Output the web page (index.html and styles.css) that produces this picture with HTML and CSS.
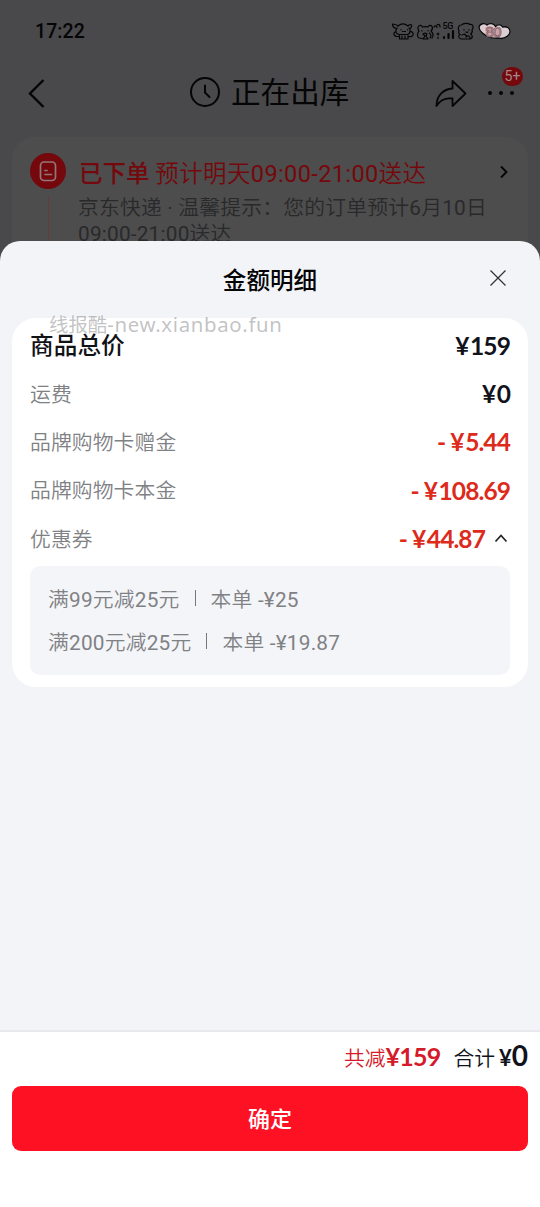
FILE: index.html
```html
<!DOCTYPE html>
<html lang="zh-CN">
<head>
<meta charset="utf-8">
<meta name="viewport" content="width=device-width">
<title>金额明细</title>
<link rel="stylesheet" href="styles.css">
</head>
<body>
<div class="screen">
  <header class="status">
    <span class="clock">17:22</span>
    <svg class="status-icons" width="120" height="22" viewBox="392 20 120 22" fill="none" stroke="#050506" stroke-width="1.2" stroke-linecap="round" stroke-linejoin="round">
      <path d="M398 26c-2-2-4-1.500-5.500-2 0 2 1.500 4 4 4.500M398 26c3-2.500 7-2.500 10 0 1-1.500 2.500-1.500 3.500-1 .5 1.500-.5 3-2 4M397 28c-2 3-1 6 1.500 6.500h9c3-1 3.500-4 1.500-6.500M395 32c-2 1-1 4 1.500 4.500h3M409.500 32c3-1 4 1 3.500 3-.5 1.500-2 2-4 1.500M399.500 35.500v3.500h8.500v-3.500M402 36v2m3-2v2M402.500 31.500h3M401 29.500v.3m6.500-.3v.3"/>
      <path d="M419 31c-1.500-2-1.500-5 .5-5.500 1.500-.5 2.500.5 3 1.500 1.500-.5 4-.5 5.500 0 1-2 3-2 4-.5s.5 3-1 4.500c2 2 2.500 5 1 7M419 31c-2 2-2 6 0 7l3 .500m8-.5c1.500-1 1-4-.5-5M422 30.500v.5m6-.5v.5M423 34l2-1 2 1-1 2 2 3h-5l2-3z"/>
      <path d="M434 27c1-1.500 2-1.500 3 .5M437 25c2-1.500 3 0 3 2M438 33v2m-1-1h2m-1 3v1.500"/>
      <path stroke-width="2.200" d="M444 37v1M448.500 34v4M453 31v7"/>
      <path d="M459 31c-1.500-3-.5-6 2.500-6 1.500-2 7-2 8.500-.5 2-.5 3.500 1 3 3.500l-1 2c1 2 0 3-1.500 4 2.500 1.500 2.500 4.500-.5 5h-9c-3-1-3-4-.5-4.500-2 0-2-2-1.500-3.500zM464 29.500v.5m5-.5v.5m-3 2l1 .5 1-.5M462 35l2.500-1 2 2M466 37c2-2 4-1 4 1"/>
      <path fill="#dccdd2" stroke="#0a0a0b" stroke-width="1.300" d="M489 37c-5-2-10-6-10-10 1-4 6-4 8-2 2-2 7-2 8.500 1.500 2-2.500 6-2 7 .5 4-1 7.500 1 7.500 4.500 0 3.500-4.500 7-9 7-4-1.500-7 1-12-1.500z"/>
      <path fill="#cfa3a9" stroke="none" d="M489 35.500c-4-2-5-6-3-8.500 3-2 7-1 8.500 2 4-2 7 0 7 3.500 0 4-6 5.500-12.500 3z"/>
      <text class="net-label" x="442.500" y="29" textLength="11">5G</text>
      <text class="battery-label" x="485.500" y="37" textLength="16">80</text>
    </svg>
  </header>
  <nav class="nav">
    <svg class="back" width="18" height="32" viewBox="0 0 18 32"><path d="M16.500 3 3 16.500 16.500 30" fill="none" stroke="#050506" stroke-width="2.400"/></svg>
    <div class="nav-title">
      <svg width="32" height="32" viewBox="0 0 32 32" fill="none" stroke="#050506" stroke-width="2" stroke-linecap="round"><circle cx="16" cy="15" r="14"/><path d="M16 8.500v7l4.500 4.500"/></svg>
      <span>正在出库</span>
    </div>
    <svg class="share" width="32" height="30" viewBox="0 0 32 30"><path d="M17.500 3 30.500 15.500 17.500 28v-7.500C10 19.500 5 22 1.500 28 1.500 18 8 11 17.500 10.500z" fill="none" stroke="#050506" stroke-width="1.800" stroke-linejoin="round"/></svg>
    <div class="more">
      <i></i><i></i><i></i>
      <span class="badge">5+</span>
    </div>
  </nav>
  <section class="order">
    <div class="timeline">
      <svg width="36" height="36" viewBox="0 0 36 36" fill="none" stroke="#92777a" stroke-width="1.700" stroke-linecap="round"><circle cx="18" cy="18" r="18" fill="#75080c" stroke="none"/><rect x="10.500" y="9" width="15" height="18.500" rx="3.500"/><path d="M15 17.500h2M15 21.500h6.500"/></svg>
      <div class="line"></div>
    </div>
    <div class="order-body">
      <div class="order-head">
        <span><b>已下单</b> <em>预计明天09:00-21:00送达</em></span>
        <svg width="10" height="16" viewBox="0 0 10 16"><path d="M1 2.500 6.500 8 1 13.500" fill="none" stroke="#050506" stroke-width="1.800"/></svg>
      </div>
      <p class="order-tip"><span>京东快递 · 温馨提示：您的订单预计6月10日</span><br>09:00-21:00送达</p>
    </div>
  </section>

  <main class="sheet">
    <div class="sheet-head">
      <h1>金额明细</h1>
      <svg class="close" width="18" height="18" viewBox="0 0 18 18"><path d="M1.500 1.500l15 15M16.500 1.500l-15 15" stroke="#333438" stroke-width="1.300"/></svg>
    </div>
    <div class="card">
      <div class="row total"><span class="label">商品总价</span><span class="price"><s>¥</s>159</span></div>
      <div class="row"><span class="label">运费</span><span class="price"><s>¥</s>0</span></div>
      <div class="row"><span class="label">品牌购物卡赠金</span><span class="price minus">- <s>¥</s>5.44</span></div>
      <div class="row"><span class="label">品牌购物卡本金</span><span class="price minus">- <s>¥</s>108.69</span></div>
      <div class="row"><span class="label">优惠券</span><span class="price minus">- <s>¥</s>44.87</span>
        <svg class="fold" width="16" height="12" viewBox="0 0 16 12"><path d="M1.500 8.500 7 2.500l5.500 6" fill="none" stroke="#222327" stroke-width="1.700"/></svg>
      </div>
      <div class="coupons">
        <div class="coupon"><span>满99元减25元</span><i></i><span>本单 -¥25</span></div>
        <div class="coupon"><span>满200元减25元</span><i></i><span>本单 -¥19.87</span></div>
      </div>
    </div>
    <footer class="footer">
      <div class="sum">
        <span class="saved">共减<b>¥159</b></span>
        <span class="due">合计<small>¥</small><b>0</b></span>
      </div>
      <button class="confirm">确定</button>
    </footer>
    <div class="watermark">线报酷<span>-new.xianbao.fun</span></div>
  </main>
</div>
</body>
</html>
```
FILE: styles.css
```css
* { box-sizing: border-box; }
body { margin: 0; font-family: Roboto, "Noto Sans CJK SC", sans-serif; }
i, em { font-style: normal; }

.screen {
  position: relative;
  width: 540px;
  height: 1207px;
  overflow: hidden;
  background: #49494b;
  color: #050506;
}

.status {
  display: flex;
  align-items: center;
  justify-content: space-between;
  height: 62px;
  padding: 0 28px 0 35px;
}
.clock { font-size: 19.5px; font-weight: 500; letter-spacing: .1px; }
.net-label { font: 500 9px Roboto, sans-serif; fill: #050506; stroke: none; }
.battery-label { font: 400 15px "Liberation Sans", sans-serif; fill: #dcb4ba; stroke: #7d5c62; stroke-width: .7; }

.nav {
  display: flex;
  align-items: center;
  height: 62px;
  padding: 0 25px 0 27px;
}
.nav-title {
  display: flex;
  align-items: center;
  gap: 10px;
  margin-left: 144px;
  margin-right: auto;
  font-size: 29.6px;
  line-height: 40px;
}
.share { margin-right: 21px; }
.more { position: relative; display: flex; gap: 7px; width: 27px; }
.more i { width: 4px; height: 4px; border-radius: 50%; background: #050506; }
.badge {
  position: absolute;
  left: 14px;
  top: -24px;
  width: 21px;
  height: 19px;
  border-radius: 10px;
  background: #75080c;
  color: #a58a8d;
  font-size: 14px;
  line-height: 19px;
  text-align: center;
}

.order {
  display: flex;
  gap: 12px;
  height: 240px;
  margin: 13px 12px 0;
  padding: 16px 18px;
  border-radius: 22px;
  background: #4d4d4d;
}
.timeline { display: flex; flex-direction: column; align-items: center; gap: 7px; width: 36px; }
.line { flex: 1; width: 1px; background: #653b3e; }
.order-body { flex: 1; }
.order-head {
  display: flex;
  justify-content: space-between;
  align-items: center;
  height: 37px;
  padding-left: 1px;
  color: #75080c;
  font-size: 23.5px;
  white-space: nowrap;
}
.order-head b { font-weight: 500; }
.order-head em, .order-tip, .label, .coupon, .sum {
  font-family: Roboto, "Noto Sans CJK SC DemiLight", "Noto Sans CJK SC", sans-serif;
  font-weight: 400;
}
.order-head em { letter-spacing: .38px; }
.order-tip {
  margin: 5px 0 0;
  font-size: 20.8px;
  line-height: 26px;
  letter-spacing: .2px;
  color: #29292b;
  white-space: nowrap;
}

.sheet {
  position: absolute;
  inset: 241px 0 0;
  display: flex;
  flex-direction: column;
  border-radius: 20px 20px 0 0;
  background: #f3f4f8;
}
.sheet-head {
  position: relative;
  display: flex;
  align-items: center;
  justify-content: center;
  height: 77px;
  padding-bottom: 2px;
}
.sheet-head h1 { margin: 0; font-size: 23.6px; font-weight: 500; }
.close { position: absolute; right: 33px; top: 28px; }

.card {
  height: 369px;
  margin: 0 12px;
  padding: 3px 18px 12px;
  border-radius: 24px;
  background: #fff;
}
.row { display: flex; align-items: center; height: 48.4px; }
.label {
  margin-right: auto;
  padding-bottom: 2px;
  font-size: 20.8px;
  letter-spacing: .1px;
  color: #808184;
}
.total .label { font-size: 23.6px; font-weight: 500; color: #111216; font-family: "Noto Sans CJK SC", sans-serif; }
.price {
  font-family: Lato, sans-serif;
  font-size: 24.5px;
  font-weight: 700;
  letter-spacing: -.9px;
  color: #11131c;
}
.price s { text-decoration: none; letter-spacing: .6px; }
.minus { color: #dd2a1b; }
.fold { margin-left: 9px; }
.coupons {
  display: flex;
  flex-direction: column;
  height: 109px;
  margin-top: 3px;
  padding: 11px 18px;
  border-radius: 10px;
  background: #f4f5f9;
}
.coupon {
  display: flex;
  align-items: center;
  height: 42.500px;
  color: #808184;
  font-size: 20.8px;
  letter-spacing: .2px;
}
.coupon i { width: 1px; height: 16px; margin: 0 15px; background: #77787c; }

.footer {
  height: 177px;
  margin-top: auto;
  padding: 0 12px;
  border-top: 2px solid #e8e8ee;
  background: #fff;
}
.sum {
  display: flex;
  justify-content: flex-end;
  align-items: baseline;
  gap: 13px;
  height: 54px;
  padding-top: 6px;
  font-size: 20.8px;
}
.sum b, .sum small { font-family: Lato, sans-serif; font-weight: 700; }
.saved { color: #d51a2a; }
.saved b { font-size: 25px; letter-spacing: -.8px; }
.due { color: #11131c; }
.due small { margin-left: 4px; font-size: 22px; }
.due b { font-size: 28px; }
.confirm {
  display: block;
  width: 100%;
  height: 65px;
  border: 0;
  border-radius: 9px;
  background: #ff1124;
  color: #fff;
  font: 500 22px "Noto Sans CJK SC", sans-serif;
  padding-bottom: 4px;
}
.watermark {
  position: absolute;
  left: 49px;
  top: 69px;
  font: 400 19.4px/28px "Noto Sans", "Noto Sans CJK SC", sans-serif;
  color: rgba(120, 120, 124, .45);
}
.watermark span { font-size: 20.4px; letter-spacing: .65px; }
```
